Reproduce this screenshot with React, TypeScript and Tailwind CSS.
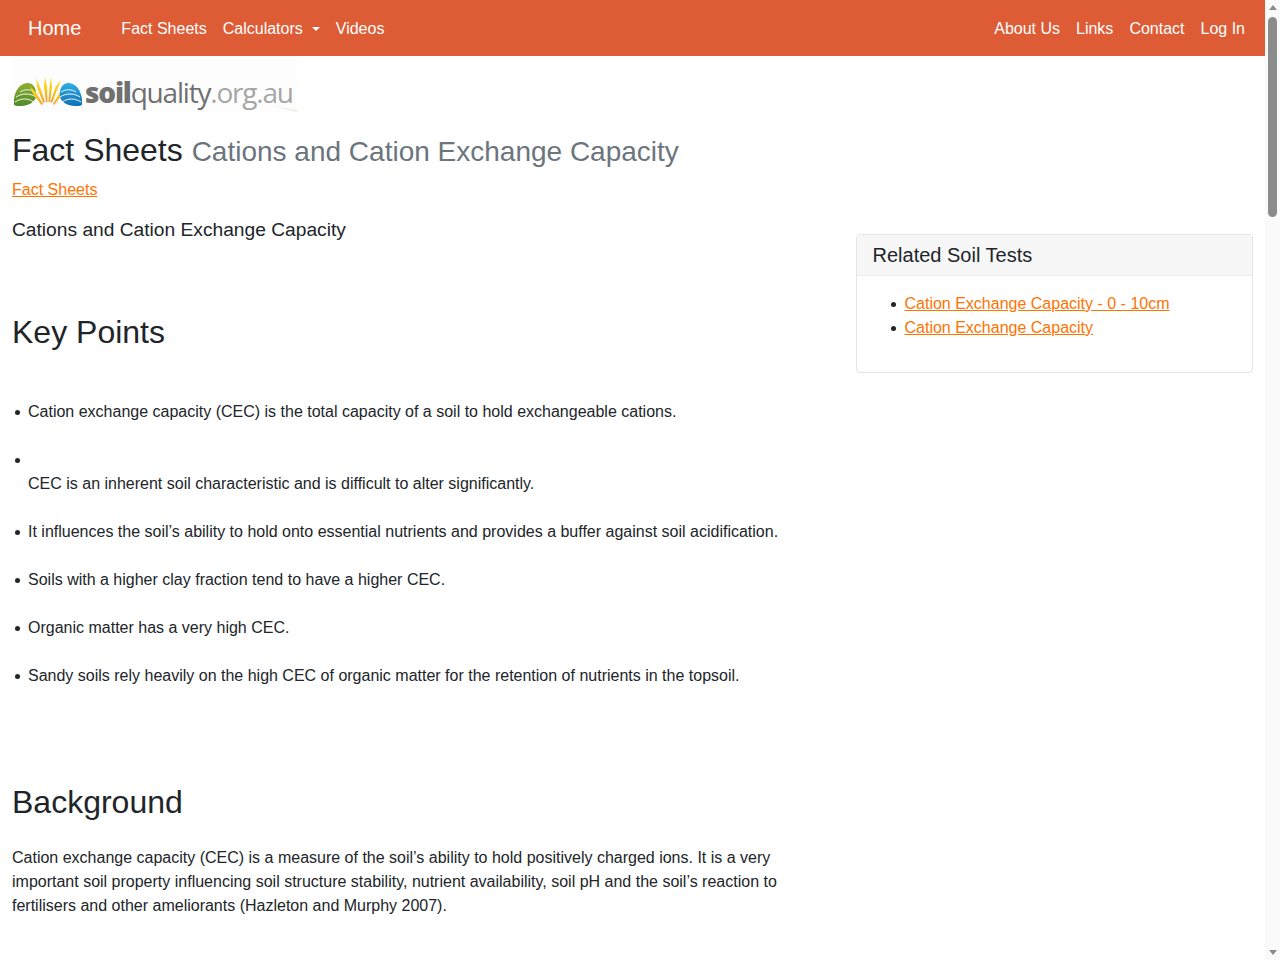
const bullets = [
  "Cation exchange capacity (CEC) is the total capacity of a soil to hold exchangeable cations.",
  "CEC is an inherent soil characteristic and is difficult to alter significantly.",
  "It influences the soil’s ability to hold onto essential nutrients and provides a buffer against soil acidification.",
  "Soils with a higher clay fraction tend to have a higher CEC.",
  "Organic matter has a very high CEC.",
  "Sandy soils rely heavily on the high CEC of organic matter for the retention of nutrients in the topsoil.",
];

const linkClassName = "text-[#ff7300] underline";
const navLinkClassName = "px-2 text-white";

const rays = [
  "M22 1 L26 10 L31 25 L29.5 26 L23.5 12 Z",
  "M31 0 L33 10 L33.5 25 L32 25 L30 10 Z",
  "M37 0 L38 10 L36 25 L34.5 25 L35.5 10 Z",
  "M47 3 L43 13 L38 26 L36.5 25 L41.5 10 Z",
  "M16 9 L23 17 L29 27 L27.5 28 L19 17 Z",
  "M53 9 L48 18 L40 28 L39 27 L45.5 16 Z",
];

const Logo = () => (
  <div className="relative flex h-14 w-[285px] items-center bg-[#fdfdfd] pt-[16px]">
    <svg width="68" height="30" viewBox="0 0 68 30" className="ml-[2px] shrink-0">
      <defs>
        <linearGradient id="ray" x1="0" y1="0" x2="0" y2="1">
          <stop offset="0" stopColor="#ffe01a" />
          <stop offset="0.55" stopColor="#fcc41c" />
          <stop offset="1" stopColor="#f39a2c" />
        </linearGradient>
        <linearGradient id="leaf" x1="0" y1="0" x2="0" y2="1">
          <stop offset="0" stopColor="#8fb030" />
          <stop offset="1" stopColor="#4f8a2a" />
        </linearGradient>
        <linearGradient id="sea" x1="0" y1="0" x2="0" y2="1">
          <stop offset="0" stopColor="#2fb0e6" />
          <stop offset="1" stopColor="#0f6fb4" />
        </linearGradient>
      </defs>
      <path d="M0 27 C-1 16 5 6 14 6 C20 6 23 13 22 20 C21 25 14 29 7 29 C3 29 0 29 0 27 Z" fill="url(#leaf)" />
      <path d="M21 15 C16 12 11 12 6 15 M22 20 C16 16 8 16 2 20 M20 25 C14 21 7 21 1 25" stroke="#fff" strokeWidth="0.9" fill="none" />
      {rays.map((d) => (
        <path key={d} d={d} fill="url(#ray)" />
      ))}
      <path d="M68 27 C69 16 63 6 54 6 C48 6 45 13 46 20 C47 25 54 29 61 29 C65 29 68 29 68 27 Z" fill="url(#sea)" />
      <path d="M47 15 C52 12 57 12 62 15 M46 20 C52 16 60 16 66 20 M48 25 C54 21 61 21 67 25" stroke="#fff" strokeWidth="0.9" fill="none" />
    </svg>
    <span className="ml-[3px] font-['Open_Sans',sans-serif] text-[28px] leading-none tracking-[-1.2px] whitespace-nowrap text-[#707070]">
      <span className="font-extrabold">soil</span>
      <span>quality</span>
      <span className="text-[#a6a6a6]">.org.au</span>
    </span>
    <svg width="30" height="8" viewBox="0 0 30 8" className="absolute right-0 bottom-0">
      <path d="M0 0 C10 3 20 5 30 6 L30 8 C20 6 10 3 0 0 Z" fill="#e9ede2" />
    </svg>
  </div>
);

export default function App() {
  return (
    <div className="flex h-[960px] overflow-hidden bg-white font-['Liberation_Sans',Arial,sans-serif] text-base leading-6 text-[#212529]">
      <div className="min-w-0 flex-1">
        <nav className="flex h-14 items-center justify-between bg-[#dd5c36] pt-[2px] pr-3 pl-4">
          <div className="flex items-center">
            <a className="mb-[2px] ml-3 mr-8 text-xl leading-[30px] text-white">Home</a>
            <a className={navLinkClassName}>Fact Sheets</a>
            <a className={`${navLinkClassName} flex items-center`}>
              Calculators
              <span className="ml-[9px] h-0 w-0 border-x-[4.8px] border-t-[4.8px] border-x-transparent border-t-white" />
            </a>
            <a className={navLinkClassName}>Videos</a>
          </div>
          <div className="flex items-center">
            <a className={navLinkClassName}>About Us</a>
            <a className={navLinkClassName}>Links</a>
            <a className={navLinkClassName}>Contact</a>
            <a className={navLinkClassName}>Log In</a>
          </div>
        </nav>

        <div className="px-3">
          <Logo />
          <h1 className="mt-[19px] text-[32px] leading-[38px] font-medium">
            Fact Sheets{" "}
            <small className="text-[28px] font-normal text-[#6c757d]">Cations and Cation Exchange Capacity</small>
          </h1>
          <div className="mt-[7px]">
            <a className={linkClassName}>Fact Sheets</a>
          </div>

          <div className="flex">
            <div className="w-[784px] shrink-0">
              <p className="mt-[13px] text-[19.2px] leading-[29px]">Cations and Cation Exchange Capacity</p>
              <h2 className="mt-[69px] text-[32px] leading-[38px]">Key Points</h2>
              <ul className="mt-[49px]">
                {bullets.map((text, i) => (
                  <li key={text} className="relative mb-6 pl-4">
                    <span className="absolute top-[10px] left-[3px] h-[5px] w-[5px] rounded-full bg-[#212529]" />
                    {i === 1 && <div className="h-6" />}
                    {text}
                  </li>
                ))}
              </ul>
              <h2 className="mt-[95px] text-[32px] leading-[38px]">Background</h2>
              <p className="mt-[25px]">
                Cation exchange capacity (CEC) is a measure of the soil’s ability to hold positively charged ions. It is a very important soil property influencing soil structure stability, nutrient availability, soil pH and the soil’s reaction to fertilisers and other ameliorants (Hazleton and Murphy 2007).
              </p>
            </div>

            <aside className="mt-[32px] ml-[59.5px] h-[139px] w-[397.5px] shrink-0 rounded border border-[#e4e4e4]">
              <div className="h-[41px] border-b border-[#ededed] bg-[#f7f7f7] px-4 text-[20px] leading-[40px]">Related Soil Tests</div>
              <ul className="pt-4 pl-[33px]">
                <li className="relative pl-[15px]">
                  <span className="absolute top-[10px] left-[1px] h-[5px] w-[5px] rounded-full bg-[#212529]" />
                  <a className={linkClassName}>Cation Exchange Capacity - 0 - 10cm</a>
                </li>
                <li className="relative pl-[15px]">
                  <span className="absolute top-[10px] left-[1px] h-[5px] w-[5px] rounded-full bg-[#212529]" />
                  <a className={linkClassName}>Cation Exchange Capacity</a>
                </li>
              </ul>
            </aside>
          </div>
        </div>
      </div>

      {/* page scrollbar */}
      <div className="flex w-[15px] shrink-0 flex-col items-center bg-[#fafafa]">
        <span className="mt-[5px] h-0 w-0 border-x-[4.5px] border-b-[5px] border-x-transparent border-b-[#8c8c8c]" />
        <span className="mt-[7px] h-[200px] w-[9px] rounded-full bg-[#8c8c8c]" />
        <span className="mt-auto mb-[5px] h-0 w-0 border-x-[4.5px] border-t-[5px] border-x-transparent border-t-[#8c8c8c]" />
      </div>
    </div>
  );
}
